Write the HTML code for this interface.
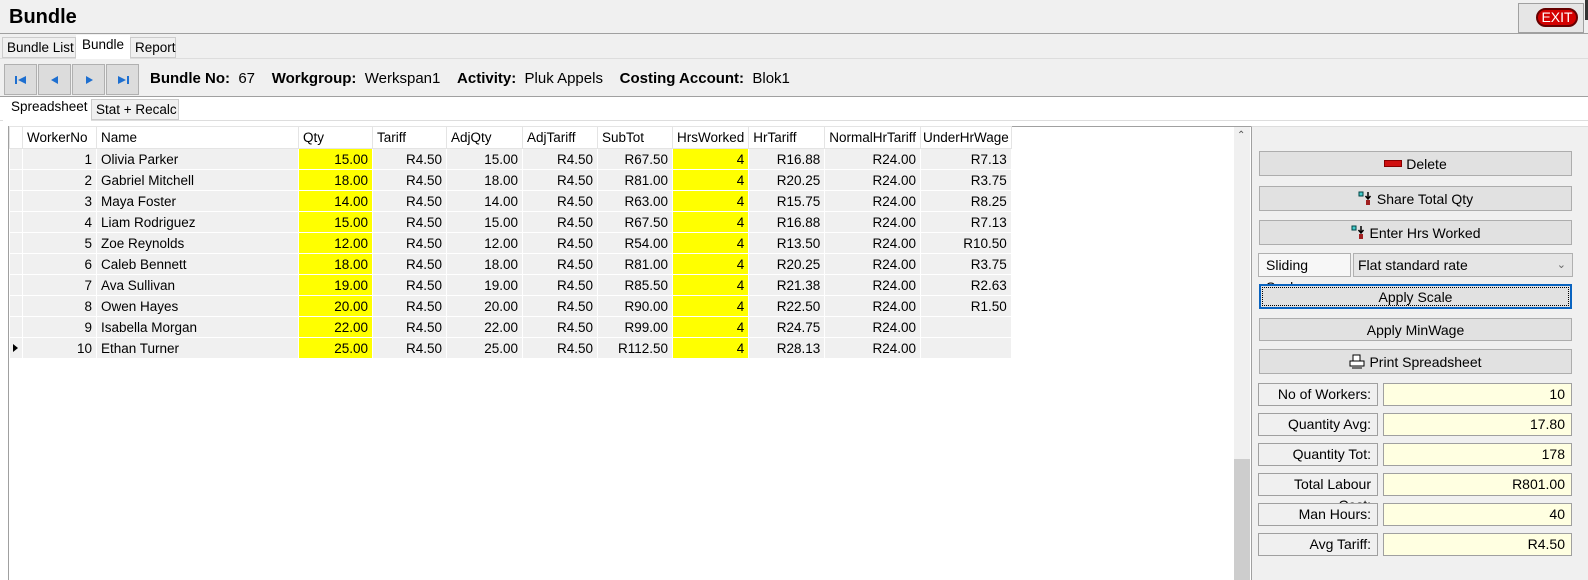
<!DOCTYPE html>
<html><head><style>
*{box-sizing:border-box;margin:0;padding:0}
body{width:1588px;height:580px;overflow:hidden;background:#f0f0f0;font-family:"Liberation Sans",Arial,sans-serif;font-size:13px;color:#000;position:relative}
.a{position:absolute}
.btn{position:absolute;left:1259px;width:313px;background:#e1e1e1;border:1px solid #adadad;display:flex;align-items:center;justify-content:center;font-size:14px}
.lbl{position:absolute;left:1258px;width:120px;height:23px;border:1px solid #a0a0a0;background:#f0f0f0;text-align:right;padding-right:6px;line-height:21px;font-size:14px}
.inp{position:absolute;left:1383px;width:189px;height:23px;border:1px solid #a0a0a0;background:#ffffe1;text-align:right;padding-right:6px;line-height:21px;font-size:14px}
.nav{position:absolute;top:64px;width:33px;height:31px;background:#dcdcdc;border:1px solid #b0b0b0;display:flex;align-items:center;justify-content:center}
table{border-collapse:collapse;position:absolute;left:9px;top:126px;table-layout:fixed}
td{height:21px;border:1px solid #fff;background:#f0f0f0;padding:0 4px;white-space:nowrap;overflow:hidden;font-size:13.5px}
tr.h td{background:#fff;border:1px solid #e4e4e4;height:22px}
td.r{text-align:right}
td.y{background:#ffff00}
</style></head><body>
<div class="a" style="left:0;top:0;width:1588px;height:34px;background:#f0f0f0;border-bottom:1px solid #a0a0a0"></div>
<div class="a" style="left:9px;top:6px;font-size:20px;font-weight:bold">Bundle</div>
<div class="a" style="left:1518px;top:3px;width:66px;height:30px;border:1px solid #a0a0a0;background:#e6e6e6"></div>
<div class="a" style="left:1536px;top:8px;width:42px;height:19px;background:#d40000;border:2px solid #600;border-radius:10px;color:#fff;font-size:14px;line-height:15px;text-align:center">EXIT</div>
<div class="a" style="left:1585px;top:0;width:3px;height:20px;background:#333"></div>
<!-- tabs -->
<div class="a" style="left:0;top:58px;width:1588px;height:1px;background:#ddd"></div>
<div class="a" style="left:2px;top:37px;width:74px;height:21px;border:1px solid #ccc;background:#f0f0f0;line-height:19px;padding-left:4px;font-size:13.5px">Bundle List</div>
<div class="a" style="left:76px;top:35px;width:54px;height:24px;background:#fff;line-height:20px;padding-left:6px;font-size:13.5px">Bundle</div>
<div class="a" style="left:130px;top:37px;width:46px;height:21px;border:1px solid #ccc;background:#f0f0f0;line-height:19px;padding-left:4px;font-size:13.5px">Report</div>
<!-- toolbar -->
<div class="a" style="left:0;top:60px;width:1588px;height:37px;background:#f0f0f0;border-bottom:1px solid #a0a0a0"></div>
<div class="nav" style="left:4px"><svg width="12" height="10"><rect x="0" y="1" width="2" height="8" fill="#1e6fd0"/><path d="M11 1L3 5L11 9Z" fill="#1e6fd0"/></svg></div>
<div class="nav" style="left:38px"><svg width="10" height="10"><path d="M8 1L1 5L8 9Z" fill="#1e6fd0"/></svg></div>
<div class="nav" style="left:72px"><svg width="10" height="10"><path d="M2 1L9 5L2 9Z" fill="#1e6fd0"/></svg></div>
<div class="nav" style="left:106px"><svg width="12" height="10"><path d="M1 1L9 5L1 9Z" fill="#1e6fd0"/><rect x="10" y="1" width="2" height="8" fill="#1e6fd0"/></svg></div>
<div class="a" style="left:150px;top:70px;font-size:15px;white-space:nowrap"><b>Bundle No:</b>&nbsp; 67&nbsp;&nbsp;&nbsp; <b>Workgroup:</b>&nbsp; Werkspan1&nbsp;&nbsp;&nbsp; <b>Activity:</b>&nbsp; Pluk Appels&nbsp;&nbsp;&nbsp; <b>Costing Account:</b>&nbsp; Blok1</div>
<!-- subtabs -->
<div class="a" style="left:0;top:97px;width:1588px;height:483px;background:#fff"></div>
<div class="a" style="left:0;top:120px;width:1588px;height:1px;background:#ddd"></div>
<div class="a" style="left:3px;top:97px;width:88px;height:24px;background:#fff;line-height:20px;padding-left:8px;font-size:13.5px">Spreadsheet</div>
<div class="a" style="left:91px;top:99px;width:88px;height:21px;border:1px solid #ccc;background:#f0f0f0;line-height:19px;padding-left:4px;font-size:13.5px">Stat + Recalc</div>
<!-- grid area -->
<div class="a" style="left:8px;top:126px;width:1243px;height:454px;background:#fff;border-left:1px solid #a0a0a0;border-top:1px solid #a0a0a0"></div>
<div class="a" style="left:1234px;top:127px;width:16px;height:453px;background:#f0f0f0"></div>
<div class="a" style="left:1234px;top:459px;width:16px;height:121px;background:#cdcdcd"></div>
<div class="a" style="left:1237px;top:130px;font-size:10px;color:#555">&#8963;</div>
<table>
<colgroup><col style="width:13px"><col style="width:74px"><col style="width:202px"><col style="width:74px"><col style="width:74px"><col style="width:76px"><col style="width:75px"><col style="width:75px"><col style="width:75px"><col style="width:76px"><col style="width:85px"><col style="width:85px"></colgroup>
<tr class="h"><td></td><td>WorkerNo</td><td>Name</td><td>Qty</td><td>Tariff</td><td>AdjQty</td><td>AdjTariff</td><td>SubTot</td><td>HrsWorked</td><td>HrTariff</td><td>NormalHrTariff</td><td style="padding:0 2px">UnderHrWage</td></tr>
<tr><td></td><td class="r">1</td><td>Olivia Parker</td><td class="r y">15.00</td><td class="r">R4.50</td><td class="r">15.00</td><td class="r">R4.50</td><td class="r">R67.50</td><td class="r y">4</td><td class="r">R16.88</td><td class="r">R24.00</td><td class="r">R7.13</td></tr>
<tr><td></td><td class="r">2</td><td>Gabriel Mitchell</td><td class="r y">18.00</td><td class="r">R4.50</td><td class="r">18.00</td><td class="r">R4.50</td><td class="r">R81.00</td><td class="r y">4</td><td class="r">R20.25</td><td class="r">R24.00</td><td class="r">R3.75</td></tr>
<tr><td></td><td class="r">3</td><td>Maya Foster</td><td class="r y">14.00</td><td class="r">R4.50</td><td class="r">14.00</td><td class="r">R4.50</td><td class="r">R63.00</td><td class="r y">4</td><td class="r">R15.75</td><td class="r">R24.00</td><td class="r">R8.25</td></tr>
<tr><td></td><td class="r">4</td><td>Liam Rodriguez</td><td class="r y">15.00</td><td class="r">R4.50</td><td class="r">15.00</td><td class="r">R4.50</td><td class="r">R67.50</td><td class="r y">4</td><td class="r">R16.88</td><td class="r">R24.00</td><td class="r">R7.13</td></tr>
<tr><td></td><td class="r">5</td><td>Zoe Reynolds</td><td class="r y">12.00</td><td class="r">R4.50</td><td class="r">12.00</td><td class="r">R4.50</td><td class="r">R54.00</td><td class="r y">4</td><td class="r">R13.50</td><td class="r">R24.00</td><td class="r">R10.50</td></tr>
<tr><td></td><td class="r">6</td><td>Caleb Bennett</td><td class="r y">18.00</td><td class="r">R4.50</td><td class="r">18.00</td><td class="r">R4.50</td><td class="r">R81.00</td><td class="r y">4</td><td class="r">R20.25</td><td class="r">R24.00</td><td class="r">R3.75</td></tr>
<tr><td></td><td class="r">7</td><td>Ava Sullivan</td><td class="r y">19.00</td><td class="r">R4.50</td><td class="r">19.00</td><td class="r">R4.50</td><td class="r">R85.50</td><td class="r y">4</td><td class="r">R21.38</td><td class="r">R24.00</td><td class="r">R2.63</td></tr>
<tr><td></td><td class="r">8</td><td>Owen Hayes</td><td class="r y">20.00</td><td class="r">R4.50</td><td class="r">20.00</td><td class="r">R4.50</td><td class="r">R90.00</td><td class="r y">4</td><td class="r">R22.50</td><td class="r">R24.00</td><td class="r">R1.50</td></tr>
<tr><td></td><td class="r">9</td><td>Isabella Morgan</td><td class="r y">22.00</td><td class="r">R4.50</td><td class="r">22.00</td><td class="r">R4.50</td><td class="r">R99.00</td><td class="r y">4</td><td class="r">R24.75</td><td class="r">R24.00</td><td class="r"></td></tr>
<tr><td style="padding:0 2px"><svg width="7" height="10"><path d="M1 1L6 5L1 9Z" fill="#000"/></svg></td><td class="r">10</td><td>Ethan Turner</td><td class="r y">25.00</td><td class="r">R4.50</td><td class="r">25.00</td><td class="r">R4.50</td><td class="r">R112.50</td><td class="r y">4</td><td class="r">R28.13</td><td class="r">R24.00</td><td class="r"></td></tr>
</table>
<!-- right panel -->
<div class="a" style="left:1251px;top:126px;width:337px;height:454px;background:#f0f0f0;border-left:1px solid #a0a0a0;border-top:1px solid #ddd"></div>
<div class="btn" style="top:151px;height:25px"><span style="display:inline-block;width:18px;height:7px;background:#d01010;border:1px solid #800;margin-right:4px"></span>Delete</div>
<div class="btn" style="top:186px;height:25px"><svg width="16" height="16" style="margin-right:3px"><rect x="1" y="1" width="4" height="4" fill="#4cc" stroke="#044"/><path d="M10 1V7M7.5 5L10 8L12.5 5" stroke="#000" stroke-width="1.5" fill="none"/><rect x="8" y="9" width="4" height="5" fill="#a02020"/></svg>Share Total Qty</div>
<div class="btn" style="top:220px;height:25px"><svg width="16" height="16" style="margin-right:3px"><rect x="1" y="1" width="4" height="4" fill="#4cc" stroke="#044"/><path d="M10 1V7M7.5 5L10 8L12.5 5" stroke="#000" stroke-width="1.5" fill="none"/><rect x="8" y="9" width="4" height="5" fill="#a02020"/></svg>Enter Hrs Worked</div>
<div class="a" style="left:1258px;top:253px;width:93px;height:24px;border:1px solid #b0b0b0;background:#f7f7f7;font-size:14px;line-height:22px;padding-left:7px">Sliding Scale:</div>
<div class="a" style="left:1353px;top:253px;width:220px;height:24px;border:1px solid #b0b0b0;background:#e5e5e5;font-size:14px;line-height:22px;padding-left:4px">Flat standard rate<span style="position:absolute;right:6px;top:0;color:#666;font-size:11px">&#8964;</span></div>
<div class="btn" style="top:284px;height:25px;border:2px solid #0a64c0;outline:1px dotted #000;outline-offset:-4px">Apply Scale</div>
<div class="btn" style="top:318px;height:23px">Apply MinWage</div>
<div class="btn" style="top:349px;height:25px"><svg width="16" height="15" style="margin-right:4px"><rect x="4" y="1" width="7" height="6" fill="#fff" stroke="#000"/><rect x="1" y="7" width="14" height="5" fill="#fff" stroke="#000"/><line x1="3" y1="14" x2="13" y2="14" stroke="#000"/></svg>Print Spreadsheet</div>
<div class="lbl" style="top:383px">No of Workers:</div><div class="inp" style="top:383px">10</div>
<div class="lbl" style="top:413px">Quantity Avg:</div><div class="inp" style="top:413px">17.80</div>
<div class="lbl" style="top:443px">Quantity Tot:</div><div class="inp" style="top:443px">178</div>
<div class="lbl" style="top:473px">Total Labour Cost:</div><div class="inp" style="top:473px">R801.00</div>
<div class="lbl" style="top:503px">Man Hours:</div><div class="inp" style="top:503px">40</div>
<div class="lbl" style="top:533px">Avg Tariff:</div><div class="inp" style="top:533px">R4.50</div>
</body></html>
